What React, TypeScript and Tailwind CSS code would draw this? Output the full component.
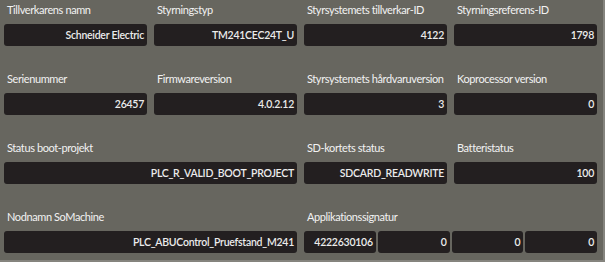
import React from "react";

type Field = { label: string; value?: string; span?: number; values?: string[] };

const fields: Field[] = [
  { label: "Tillverkarens namn", value: "Schneider Electric" },
  { label: "Styrningstyp", value: "TM241CEC24T_U" },
  { label: "Styrsystemets tillverkar-ID", value: "4122" },
  { label: "Styrningsreferens-ID", value: "1798" },
  { label: "Serienummer", value: "26457" },
  { label: "Firmwareversion", value: "4.0.2.12" },
  { label: "Styrsystemets hårdvaruversion", value: "3" },
  { label: "Koprocessor version", value: "0" },
  { label: "Status boot-projekt", value: "PLC_R_VALID_BOOT_PROJECT", span: 2 },
  { label: "SD-kortets status", value: "SDCARD_READWRITE" },
  { label: "Batteristatus", value: "100" },
  { label: "Nodnamn SoMachine", value: "PLC_ABUControl_Pruefstand_M241", span: 2 },
  { label: "Applikationssignatur", values: ["4222630106", "0", "0", "0"], span: 2 },
];

function Box({ text }: { text: string }) {
  return (
    <div className="h-[22px] rounded-[3px] bg-[#231f20] flex items-center justify-end pr-[3px] text-[10.5px] tracking-[-0.25px] font-semibold text-[#ececec] leading-none whitespace-nowrap overflow-hidden">
      {text}
    </div>
  );
}

export default function App() {
  return (
    <div
      className="w-[605px] h-[262px] bg-[#67665f] border-r-2 border-b-2 border-r-[#85847e] border-b-[#85847e] overflow-hidden"
      style={{ fontFamily: "Lato, 'Noto Sans', sans-serif" }}
    >
      <div className="grid grid-cols-[143px_143px_143px_143px] gap-x-[7px] gap-y-[23px] pl-[4px]">
        {fields.map((f, i) => (
          <div key={i} className={f.span === 2 ? "col-span-2" : ""}>
            <div className="h-[24px] pt-[3px] pl-[3px] text-[11px] tracking-[-0.4px] leading-[14px] text-[#f2f2f2] whitespace-nowrap">
              {f.label}
            </div>
            {f.values ? (
              <div className="grid grid-cols-4 gap-x-[2px]">
                {f.values.map((v, j) => (
                  <Box key={j} text={v} />
                ))}
              </div>
            ) : (
              <Box text={f.value!} />
            )}
          </div>
        ))}
      </div>
    </div>
  );
}
